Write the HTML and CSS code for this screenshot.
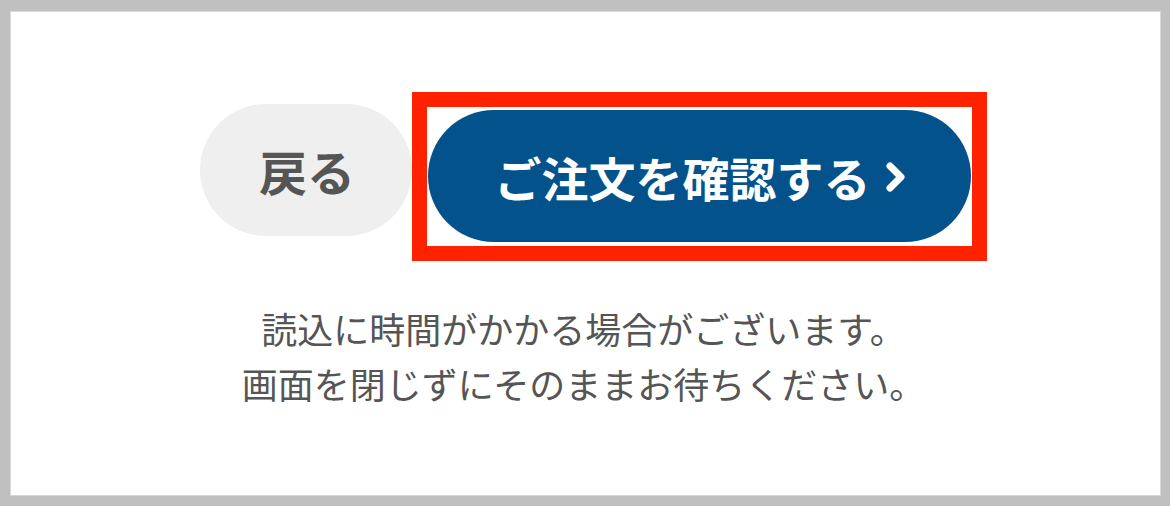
FILE: index.html
```html
<!DOCTYPE html>
<html lang="ja">
<head>
<meta charset="utf-8">
<link rel="stylesheet" href="styles.css">
</head>
<body>
<div class="frame">
  <div class="panel">
    <div class="actions">
      <button class="btn-back" type="button">戻る</button>
      <div class="highlight">
        <button class="btn-confirm" type="button">
          <span>ご注文を確認する</span>
          <svg class="chev" width="22" height="32" viewBox="0 0 22 32" aria-hidden="true"><polyline points="5,5 16,16 5,27" fill="none" stroke="#fff" stroke-width="7" stroke-linecap="round" stroke-linejoin="round"/></svg>
        </button>
      </div>
    </div>
    <p class="note">読込に時間がかかる場合がございます。<br>画面を閉じずにそのままお待ちください。</p>
  </div>
</div>
</body>
</html>
```
FILE: styles.css
```css
html, body {
  margin: 0;
  padding: 0;
}
body {
  width: 1170px;
  height: 506px;
  background: #c0c0c0;
  font-family: "Noto Sans CJK JP", "Noto Sans", sans-serif;
}
.frame {
  box-sizing: border-box;
  width: 1170px;
  height: 506px;
  padding: 11px 9px 10px 10px;
}
.panel {
  box-sizing: border-box;
  width: 1151px;
  height: 485px;
  background: #fff;
  border: 1px solid #d8d8d8;
  padding-top: 80px;
}
.actions {
  display: flex;
  align-items: flex-start;
  padding-left: 189px;
}
.btn-back {
  margin-top: 12px;
  width: 212px;
  height: 132px;
  border: none;
  border-radius: 66px;
  background: #efefef;
  color: #555;
  font-family: inherit;
  font-size: 48px;
  font-weight: 700;
  padding: 0 0 0 2px;
  line-height: 1;
}
.highlight {
  box-sizing: border-box;
  width: 575px;
  height: 169px;
  border: 15px solid #ff2200;
  padding: 3px 1px 4px 1px;
  background: #fff;
}
.btn-confirm {
  width: 100%;
  height: 132px;
  border: none;
  border-radius: 66px;
  background: #03528c;
  color: #fff;
  font-family: inherit;
  font-size: 47px;
  font-weight: 700;
  display: flex;
  align-items: center;
  justify-content: center;
  gap: 14px;
  padding: 0 0 0 2px;
  line-height: 1;
}
.chev {
  display: block;
  margin-top: 2px;
}
.note {
  margin: 40px 0 0 0;
  padding-right: 4px;
  text-align: center;
  color: #555;
  font-size: 36px;
  line-height: 55px;
}
```
